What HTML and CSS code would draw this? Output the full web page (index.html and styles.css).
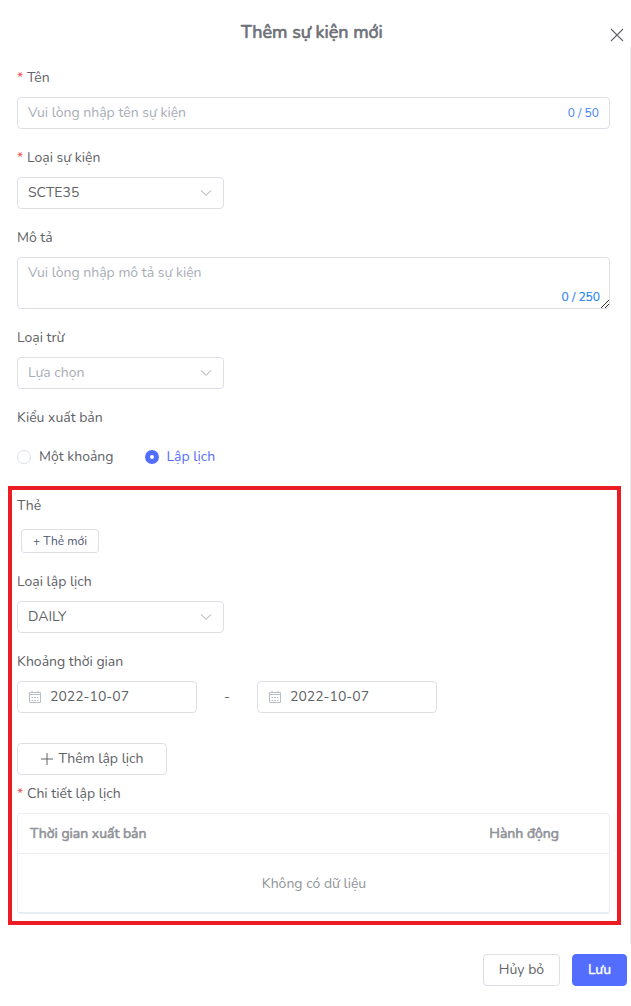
FILE: index.html
```html
<!DOCTYPE html>
<html lang="vi">
<head>
<meta charset="utf-8">
<title>Thêm sự kiện mới</title>
<link rel="stylesheet" href="styles.css">
</head>
<body>
<main class="dialog">
  <header class="header">
    <h1 class="title">Thêm sự kiện mới</h1>
    <svg class="close" width="14" height="14" viewBox="0 0 14 14"><path d="M1 1l12 12M13 1L1 13"/></svg>
  </header>
  <form class="body">
    <div class="label required"><span>Tên</span></div>
    <div class="field"><span class="placeholder">Vui lòng nhập tên sự kiện</span><span class="count">0 / 50</span></div>
    <div class="label required gap"><span>Loại sự kiện</span></div>
    <div class="field select"><span class="caps">SCTE35</span><svg class="chevron" width="12" height="8" viewBox="0 0 12 8"><path d="M1 1.3l5 5 5-5"/></svg></div>
    <div class="label gap"><span>Mô tả</span></div>
    <div class="field textarea"><span class="placeholder">Vui lòng nhập mô tả sự kiện</span><span class="count count-area">0 / 250</span><svg class="resize" width="10" height="10" viewBox="0 0 10 10"><path d="M1 9L9 1M5 9L9 5"/></svg></div>
    <div class="label gap"><span>Loại trừ</span></div>
    <div class="field select"><span class="placeholder">Lựa chọn</span><svg class="chevron" width="12" height="8" viewBox="0 0 12 8"><path d="M1 1.3l5 5 5-5"/></svg></div>
    <div class="label gap"><span>Kiểu xuất bản</span></div>
    <div class="radios">
      <div class="radio"><i class="dot"></i><span>Một khoảng</span></div>
      <div class="radio checked"><i class="dot"></i><span>Lập lịch</span></div>
    </div>
    <section class="schedule">
      <div class="label"><span>Thẻ</span></div>
      <div class="tag"><span>+ Thẻ mới</span></div>
      <div class="label gap"><span>Loại lập lịch</span></div>
      <div class="field select"><span class="caps">DAILY</span><svg class="chevron" width="12" height="8" viewBox="0 0 12 8"><path d="M1 1.3l5 5 5-5"/></svg></div>
      <div class="label gap"><span>Khoảng thời gian</span></div>
      <div class="range">
        <div class="field date"><svg class="calendar" width="14" height="14" viewBox="0 0 14 14"><path d="M1.5 2.5h11v10h-11zM1.5 4.5h11M4 1v2M10 1v2"/><path class="days" d="M3.5 7.5h7M3.5 10.5h7"/></svg><span>2022-10-07</span></div>
        <span class="dash">-</span>
        <div class="field date"><svg class="calendar" width="14" height="14" viewBox="0 0 14 14"><path d="M1.5 2.5h11v10h-11zM1.5 4.5h11M4 1v2M10 1v2"/><path class="days" d="M3.5 7.5h7M3.5 10.5h7"/></svg><span>2022-10-07</span></div>
      </div>
      <div class="button add"><svg class="plus" width="12" height="12" viewBox="0 0 12 12"><path d="M0 6h12M6 0v12"/></svg><span>Thêm lập lịch</span></div>
      <div class="label required details"><span>Chi tiết lập lịch</span></div>
      <div class="table">
        <div class="thead"><span class="time">Thời gian xuất bản</span><span class="action">Hành động</span></div>
        <div class="empty"><span>Không có dữ liệu</span></div>
      </div>
    </section>
  </form>
  <footer class="footer">
    <div class="button cancel"><span>Hủy bỏ</span></div>
    <div class="button primary"><span>Lưu</span></div>
  </footer>
  <div class="highlight"></div>
</main>
</body>
</html>
```
FILE: styles.css
```css
* { box-sizing: border-box; }
body { margin: 0; background: #fff; color: #606266; font: 14px/20px Nunito, Lato, sans-serif; }
.dialog { position: relative; width: 631px; height: 1006px; }
.header { display: flex; height: 47px; padding: 21px 7px 0 241px; justify-content: space-between; align-items: flex-start; }
.title { margin: 0; color: #6c7277; font-size: 18px; line-height: 22px; font-weight: 400; -webkit-text-stroke: 0.7px #6c7277; white-space: nowrap; }
.close { margin-top: 7px; fill: none; stroke: #606266; stroke-width: 1.1; }
.body { height: 897px; padding: 10px 20px 0 17px; border-right: 1px solid #ebebed; }
.label { display: flex; height: 40px; padding-top: 2px; align-items: center; white-space: nowrap; }
.gap { margin-top: 8px; }
.required::before { content: "*"; width: 10px; color: #f55050; }
.field { display: flex; height: 32px; padding: 0 10px; align-items: center; justify-content: space-between; border: 1px solid #dcdfe6; border-radius: 4px; background: #fff; white-space: nowrap; }
.placeholder { color: #a9adb5; }
.count { color: #3b7cf6; font-size: 12px; }
.select { width: 207px; padding-right: 11px; }
.chevron { fill: none; stroke: #bcc0c8; stroke-width: 1.1; }
.textarea { position: relative; height: 52px; padding-top: 5px; align-items: flex-start; }
.count-area { position: absolute; right: 9px; bottom: 1px; color: #2084f0; -webkit-text-stroke: 0.15px #2084f0; }
.resize { position: absolute; right: -1px; bottom: -1px; fill: none; stroke: #333; stroke-width: 1; }
.radios { display: flex; height: 40px; align-items: center; gap: 31px; }
.radio { display: flex; gap: 8px; align-items: center; white-space: nowrap; }
.dot { width: 14px; height: 14px; border: 1px solid #dcdfe6; border-radius: 50%; }
.checked { color: #536dfe; }
.checked .dot { border: 5px solid #536dfe; }
.schedule { padding-top: 8px; }
.tag { display: flex; width: 78px; height: 24px; margin: 4px 0 0 4px; align-items: center; justify-content: center; border: 1px solid #dcdfe6; border-radius: 3px; color: #4d5570; font-size: 12px; white-space: nowrap; }
.range { display: flex; width: 420px; align-items: center; justify-content: space-between; }
.date { width: 180px; justify-content: flex-start; gap: 8px; }
.calendar { fill: none; stroke: #b8bcc4; }
.days { stroke-dasharray: 1.7 1; }
.button { display: flex; height: 32px; align-items: center; justify-content: center; border: 1px solid #dcdfe6; border-radius: 4px; white-space: nowrap; }
.add { width: 150px; margin-top: 30px; gap: 6px; }
.plus { fill: none; stroke: #606266; stroke-width: 1; }
.details { margin-top: -2px; }
.table { height: 101px; border: 1px solid #ebeef5; border-bottom: 2px solid #e8edf3; border-radius: 4px; color: #909399; }
.thead { display: flex; height: 40px; padding: 0 50px 0 12px; align-items: center; justify-content: space-between; border-bottom: 1px solid #ebeef5; -webkit-text-stroke: 0.6px #909399; }
.empty { display: flex; height: 59px; padding-left: 1px; align-items: center; justify-content: center; }
.footer { display: flex; padding: 10px 4px 0; justify-content: flex-end; gap: 12px; }
.cancel { width: 77px; }
.primary { width: 55px; border-color: #536dfe; background: #536dfe; color: #fff; -webkit-text-stroke: 0.4px #fff; }
.highlight { position: absolute; left: 8px; top: 486px; width: 613px; height: 439px; border: 4px solid #ec1c24; pointer-events: none; }
```
